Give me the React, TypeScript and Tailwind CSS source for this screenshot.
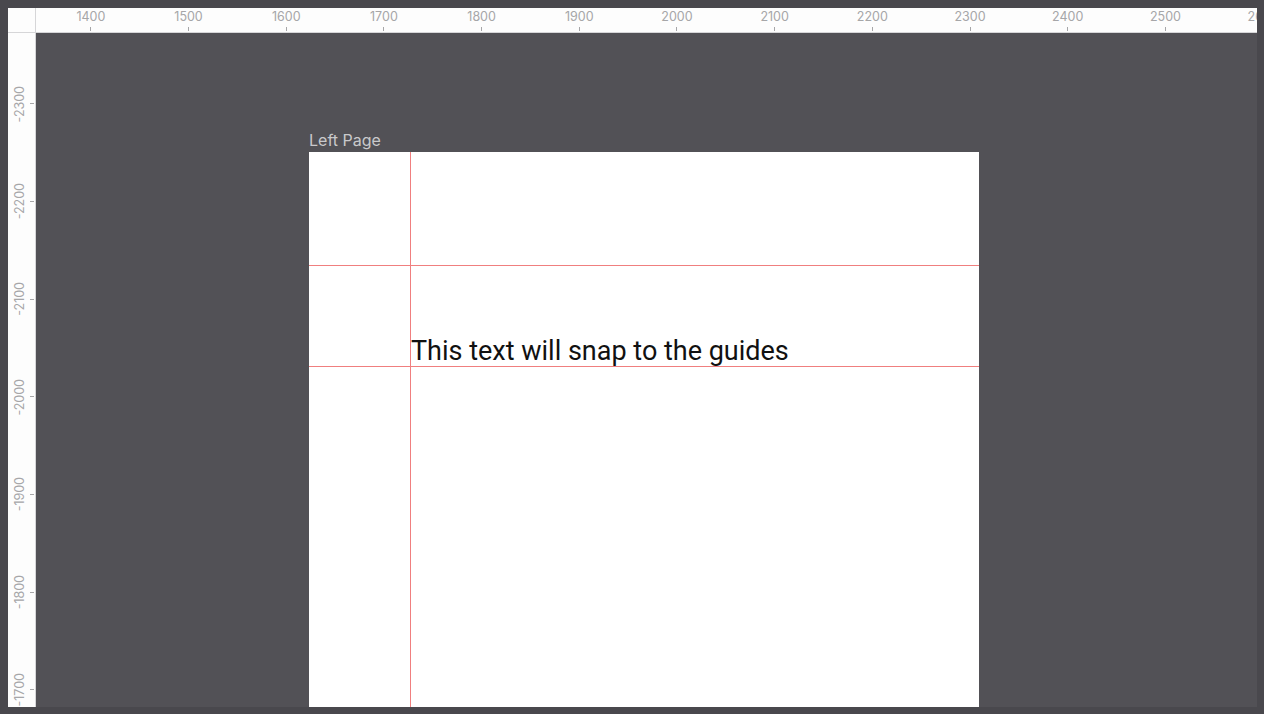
import React from "react";

const hValues = [1400, 1500, 1600, 1700, 1800, 1900, 2000, 2100, 2200, 2300, 2400, 2500, 2600];
const vValues = [-2300, -2200, -2100, -2000, -1900, -1800, -1700];

export default function App() {
  return (
    <div className="h-[714px] w-[1264px] overflow-hidden bg-[#49484d] pt-[8px] pl-[8px] pr-[7px] pb-[7px]">
      <div className="grid h-full w-full grid-cols-[28px_1fr] grid-rows-[25px_1fr] overflow-hidden">
        {/* corner */}
        <div className="border-r border-b border-[#d6d6d8] bg-[#fdfdfd]" />
        {/* top ruler */}
        <div className="flex overflow-hidden border-b border-[#d6d6d8] bg-[#fdfdfd] pl-[6px] font-['Inter',sans-serif] text-[12.5px] text-[#a6a6a8]">
          {hValues.map((v) => (
            <div key={v} className="flex h-full w-[97.7px] shrink-0 flex-col items-center">
              <span className="mt-[1px] leading-[15px]">{v}</span>
              <span className="mt-[3px] h-[4px] w-px bg-[#a6a6a8]" />
            </div>
          ))}
        </div>
        {/* left ruler */}
        <div className="flex flex-col overflow-hidden border-r border-[#d6d6d8] bg-[#fdfdfd] pt-[22px] font-['Inter',sans-serif] text-[12.5px] text-[#a6a6a8]">
          {vValues.map((v) => (
            <div key={v} className="flex h-[97.7px] shrink-0 items-center gap-[3px] pl-[4px]">
              <span className="rotate-180 whitespace-nowrap leading-[15px] [writing-mode:vertical-rl]">
                {v}
              </span>
              <span className="h-px w-[4px] bg-[#a6a6a8]" />
            </div>
          ))}
        </div>
        {/* canvas */}
        <div className="overflow-hidden bg-[#525156] pl-[273px] pt-[98px]">
          <div className="w-[670px]">
            <div className="mb-[3px] font-['Inter',sans-serif] text-[16px] leading-[18px] text-[#c9c9cb]">
              Left Page
            </div>
            <div className="relative h-[700px] w-[670px] bg-white pl-[102px] pt-[183px]">
              <div className="absolute left-[101px] top-0 h-full w-px bg-[#f07f7f]" />
              <div className="absolute left-0 top-[113px] h-px w-full bg-[#f07f7f]" />
              <div className="absolute left-0 top-[214px] h-px w-full bg-[#f07f7f]" />
              <div className="whitespace-nowrap font-['Roboto',sans-serif] text-[27px] leading-[32px] text-[#111111]">
                This text will snap to the guides
              </div>
            </div>
          </div>
        </div>
      </div>
    </div>
  );
}
